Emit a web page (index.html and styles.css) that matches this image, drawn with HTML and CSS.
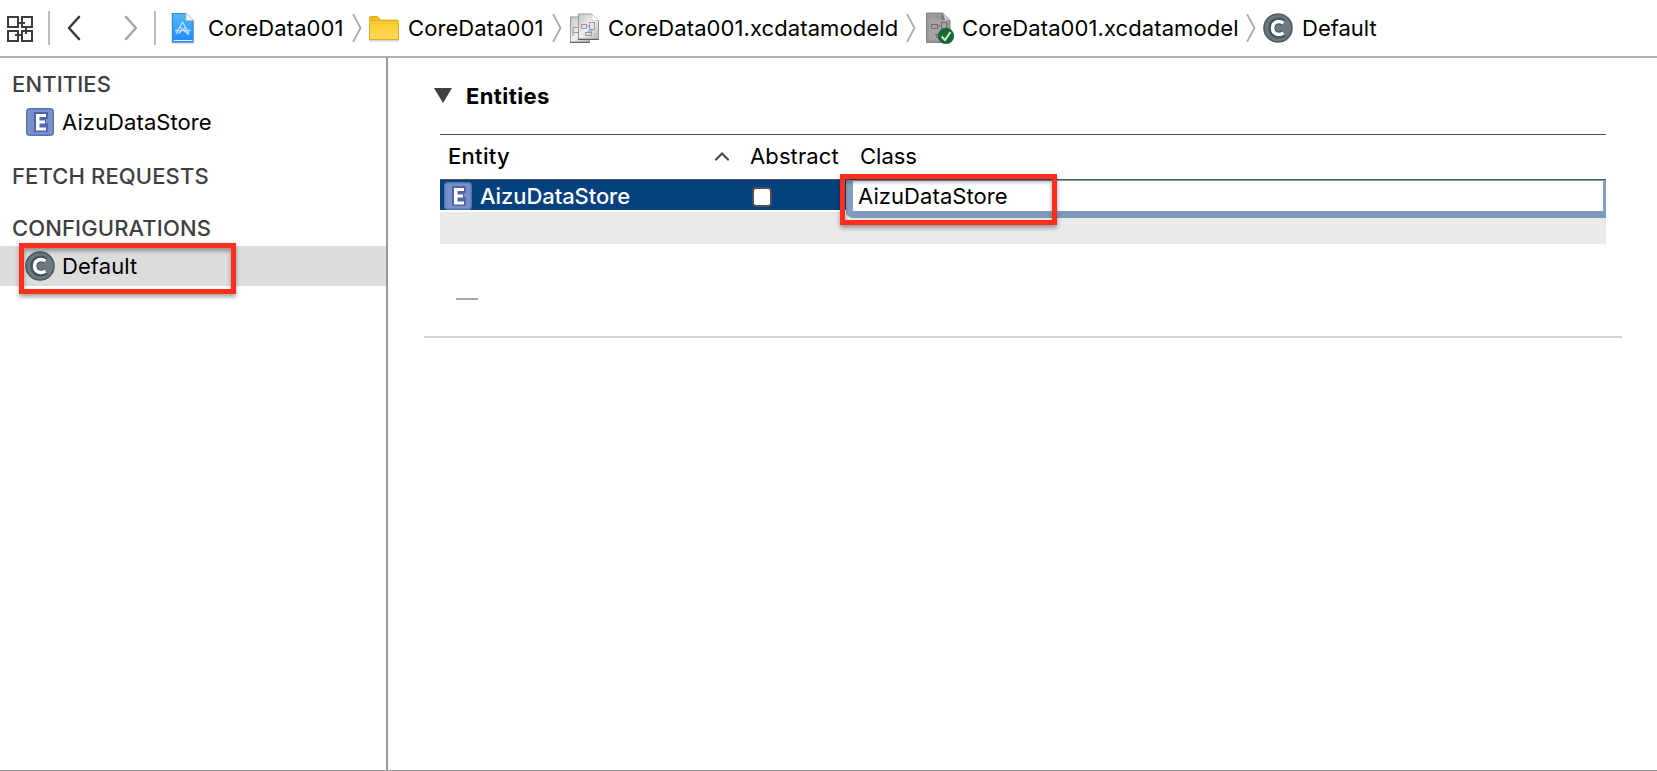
FILE: index.html
```
<!DOCTYPE html>
<html lang="en">
<head>
<meta charset="utf-8">
<title>CoreData001</title>
<link rel="stylesheet" href="styles.css">
</head>
<body>
<svg class="defs" width="0" height="0" aria-hidden="true">
  <defs>
    <linearGradient id="blue" x1="0" y1="0" x2="0" y2="1"><stop offset="0" stop-color="#52b9f5"/><stop offset="1" stop-color="#2089fb"/></linearGradient>
    <linearGradient id="gold" x1="0" y1="0" x2="0" y2="1"><stop offset="0" stop-color="#ffce2c"/><stop offset="1" stop-color="#ffda5c"/></linearGradient>
    <linearGradient id="paper" x1="0" y1="0" x2="1" y2="1"><stop offset="0" stop-color="#c4c4c4"/><stop offset=".5" stop-color="#f0f0f0"/><stop offset="1" stop-color="#b8b8b8"/></linearGradient>
    <symbol id="config" viewBox="0 0 30 30">
      <circle cx="15" cy="15" r="14" fill="#6c7a80" stroke="#4b5c63" stroke-width="1.6"/>
      <path d="M20.8 9.6C15.500 6.200 8.800 8.500 8.800 15S15.500 23.800 20.800 20.400" fill="none" stroke="#44545b" stroke-width="7"/>
      <path d="M20.500 10C15.500 6.900 9.600 9 9.600 15S15.500 23.100 20.500 20" fill="none" stroke="#fff" stroke-width="3.500"/>
    </symbol>
    <symbol id="entity" viewBox="0 0 28 28">
      <rect x=".75" y=".75" width="26.500" height="26.500" rx="3" fill="#7b8fc7" stroke="#5076b8" stroke-width="1.500"/>
      <path d="M8 4h14v7h-2v4h2v9H8z" fill="#4e66ac"/>
      <path d="M10 6h10v3h-6.500v3.500h5.500v3h-5.500V19.500H20v3H10z" fill="#fff"/>
    </symbol>
  </defs>
</svg>
<div class="window">
  <header class="jumpbar">
    <svg class="related" width="26" height="26" viewBox="0 0 26 26" fill="none" stroke="#3c3c3c" stroke-width="2"><path d="M1 1h10v10H1zM15 1h10v10H15zM1 15h10v10H1zM15 15h10v10H15zM11 7h7M19 11v7M15 19H8"/></svg>
    <span class="divider"></span>
    <svg class="back" width="14" height="26" viewBox="0 0 14 26"><path d="M12 2L2 13l10 11" fill="none" stroke="#3d3d3d" stroke-width="2.600" stroke-linecap="round" stroke-linejoin="round"/></svg>
    <svg class="forward" width="14" height="26" viewBox="0 0 14 26"><path d="M2 2l10 11L2 24" fill="none" stroke="#a6a6a6" stroke-width="2.600" stroke-linecap="round" stroke-linejoin="round"/></svg>
    <span class="divider second"></span>
    <nav class="crumbs">
      <span class="crumb project">
        <svg class="glyph" width="30" height="32" viewBox="0 0 30 32"><path d="M2.500 1h15l7.500 7.500V31.500h-22.500z" fill="#999" opacity=".6"/><path d="M3.500 1.500h14l6.500 7v21.500H3.500z" fill="url(#blue)" stroke="#2b87da"/><path d="M17 1l7.500 7.500H17z" fill="#f4f4f4" stroke="#bbb" stroke-width=".6"/><path d="M4.500 28.500h19" stroke="#d9efff"/><path d="M13.500 10L7 22M13.500 10L20 22M6 18.500h15.500M10.500 14.500l9 8M9.500 21.500l7-6" fill="none" stroke="#b9e0ff" stroke-width="1.400"/></svg>
        <span class="label">CoreData001</span>
      </span>
      <svg class="sep" width="10" height="28" viewBox="0 0 10 28"><path d="M1 0l7.500 14L1 28"/></svg>
      <span class="crumb folder">
        <svg class="glyph" width="30" height="32" viewBox="0 0 30 32"><path d="M0 28h30v1.500H0z" fill="#999" opacity=".4"/><path d="M.5 6q0-1.500 1.500-1.500h6q1.500 0 2.500 2l1 1.500H28q1.500 0 1.500 1.500V27.500H.5z" fill="#efbb25" stroke="#e3b02b"/><path d="M1 11.500h28v15.500H1z" fill="url(#gold)"/><path d="M.5 10.500h29" stroke="#f9d45c"/><path d="M.5 27.500h29" stroke="#e0ad29"/></svg>
        <span class="label">CoreData001</span>
      </span>
      <svg class="sep" width="10" height="28" viewBox="0 0 10 28"><path d="M1 0l7.500 14L1 28"/></svg>
      <span class="crumb bundle">
        <svg class="glyph" width="30" height="32" viewBox="0 0 30 32"><path d="M1.500 5h19v25h-19z" fill="url(#paper)" stroke="#999"/><path d="M1 30.500h20" stroke="#666"/><path d="M4 15.500h6v5H4zM4 24v-3.500" fill="none" stroke="#8b9ac0"/><path d="M4 15.500h6" stroke="#cc8585"/><path d="M9.500 2H23l6.500 6.500v18.500h-20z" fill="url(#paper)" stroke="#999"/><path d="M9 27.500h21" stroke="#606060"/><path d="M23 2v6.500h6.500z" fill="#fff" stroke="#bbb" stroke-width=".5"/><path d="M12.500 12.500h5v4h-5zM20.500 10.500h5v7h-5zM16.500 20.500h6v3h-6zM17.500 14h3M23 17.500v1.500h-3.500v1.500" fill="none" stroke="#8b9ac0"/><path d="M12 12.500h6M20 10.500h6M16 20.500h7" stroke="#d47f86"/></svg>
        <span class="label">CoreData001.xcdatamodeld</span>
      </span>
      <svg class="sep" width="10" height="28" viewBox="0 0 10 28"><path d="M1 0l7.500 14L1 28"/></svg>
      <span class="crumb model">
        <svg class="glyph" width="30" height="32" viewBox="0 0 30 32"><path d="M.5 1H17l7 7v22.500H.5z" fill="#999" stroke="#858585"/><path d="M3 7h18v21H3z" fill="#a4a4a4"/><path d="M15.500 1.500V8H24z" fill="#7b7b7b"/><path d="M17 1l7 7h-5z" fill="#ccc"/><path d="M5.500 12.500h6v4h-6zM15.500 10.500h5v7h-5zM11.500 14h4M10.500 22.500h6v3h-6zM18 17.500v3" fill="none" stroke="#6b6f7d"/><path d="M5 12.500h7M15 10.500h6M9 22.500h5" stroke="#a6545c"/><circle cx="20" cy="24" r="7.800" fill="#12682f" stroke="#0d5526" stroke-width=".6"/><path d="M15.500 24.500l3.500 3.500 5.500-8" fill="none" stroke="#d5ead9" stroke-width="2"/></svg>
        <span class="label">CoreData001.xcdatamodel</span>
      </span>
      <svg class="sep" width="10" height="28" viewBox="0 0 10 28"><path d="M1 0l7.500 14L1 28"/></svg>
      <span class="crumb leaf">
        <svg class="glyph" width="30" height="30"><use href="#config"/></svg>
        <span class="label">Default</span>
      </span>
    </nav>
  </header>
  <div class="body">
    <aside class="sidebar">
      <h2 class="group">ENTITIES</h2>
      <div class="item"><svg class="entity-icon" width="28" height="28"><use href="#entity"/></svg><span class="name">AizuDataStore</span></div>
      <h2 class="group fetch">FETCH REQUESTS</h2>
      <h2 class="group configs">CONFIGURATIONS</h2>
      <div class="item selected"><svg class="config-icon" width="30" height="30"><use href="#config"/></svg><span class="name default">Default</span><span class="callout"></span></div>
    </aside>
    <main class="editor">
      <div class="section-title">
        <svg width="18" height="15" viewBox="0 0 18 15"><path d="M0 0h18L9 15z" fill="#404040"/></svg>
        <h1 class="heading">Entities</h1>
      </div>
      <div class="table">
        <div class="thead">
          <span class="col-entity"><span class="th-entity">Entity</span><svg width="14" height="9" viewBox="0 0 14 9"><path d="M1 7.500L7 1.500l6 6" fill="none" stroke="#4a4a4a" stroke-width="2.200" stroke-linecap="round" stroke-linejoin="round"/></svg></span>
          <span class="th-abstract">Abstract</span>
          <span class="th-class">Class</span>
        </div>
        <div class="row">
          <svg class="row-icon" width="28" height="28"><use href="#entity"/></svg>
          <span class="name row-name">AizuDataStore</span>
          <span class="checkbox"></span>
          <div class="field"><span class="name">AizuDataStore</span><span class="callout"></span></div>
        </div>
        <div class="row-empty"></div>
      </div>
      <div class="minus"></div>
      <div class="rule"></div>
    </main>
  </div>
</div>
</body>
</html>
```
FILE: styles.css
```
* { box-sizing: border-box; }
body { margin: 0; background: #fff; color: #000; font: 22px/30px Inter, "Liberation Sans", sans-serif; white-space: nowrap; }
svg { display: block; flex: none; }
.defs { position: absolute; }
.window { height: 771px; display: flex; flex-direction: column; overflow: hidden; border-bottom: 1px solid #999; }

.jumpbar { height: 58px; flex: none; display: flex; align-items: flex-start; border-bottom: 2px solid #b0b0b0; padding-left: 7px; }
.related { margin-top: 16px; }
.divider { width: 2px; height: 34px; margin: 11px 0 0 15px; background: #bcbcbc; }
.back { margin: 15px 0 0 17px; }
.forward { margin: 15px 0 0 43px; }
.second { margin-left: 16px; }
.crumbs { display: flex; height: 56px; align-items: center; padding-left: 13px; }
.crumb { display: flex; align-items: center; gap: 9px; }
.project { width: 183px; }
.folder { width: 183px; }
.bundle { width: 337px; }
.model { width: 320px; }
.model .glyph { margin-right: -3px; }
.sep { margin-right: 7px; fill: none; stroke: #ababab; stroke-width: 1.8; }
.bundle + .sep { margin-right: 10px; }
.label { letter-spacing: 0.09px; }
.leaf .label { letter-spacing: 0; }

.body { flex: 1; display: flex; }
.sidebar { width: 388px; border-right: 2px solid #999; padding-top: 11px; }
.group { margin: 0; padding-left: 12px; font-size: 22px; font-weight: 500; line-height: 30px; letter-spacing: 0.12px; color: #404040; }
.item { display: flex; align-items: center; height: 40px; margin-top: 3px; padding-left: 26px; gap: 8px; }
.item .name { letter-spacing: 0.08px; }
.fetch { margin-top: 19px; }
.configs { margin-top: 22px; }
.selected { position: relative; background: #dcdcdc; padding-left: 25px; gap: 7px; }
.callout { position: absolute; left: 19px; top: -3px; width: 217px; height: 51px; border: 5px solid #ff2d1c; box-shadow: 0 3px 4px rgba(0,0,0,.35), inset 0 3px 4px rgba(0,0,0,.35); }

.editor { flex: 1; padding: 23px 35px 0 36px; }
.section-title { display: flex; align-items: center; gap: 14px; padding-left: 10px; }
.section-title svg { margin-bottom: 1px; }
.heading { margin: 0; font-size: 22px; font-weight: 700; line-height: 30px; letter-spacing: 0.4px; }
.table { margin: 23px 16px 0; height: 110px; border-top: 1px solid #555; }
.thead { display: flex; align-items: flex-start; height: 45px; padding-top: 6px; border-bottom: 1px solid #555; }
.col-entity { display: flex; width: 310px; padding: 0 21px 0 8px; justify-content: space-between; align-items: center; }
.th-entity { font-weight: 500; letter-spacing: 0.3px; }
.th-abstract { width: 110px; letter-spacing: 0.12px; }
.row { height: 30px; display: flex; align-items: flex-start; background: #05417e; padding-left: 4px; }
.row-icon { margin-top: 2px; }
.row-name { width: 272px; margin: 1px 0 0 8px; color: #fff; }
.row .row-name { font-weight: 500; letter-spacing: -0.08px; }
.checkbox { width: 20px; height: 20px; margin-top: 7px; border: 2px solid #505050; border-radius: 4px; background: #fff; }
.field { position: relative; z-index: 1; flex: 1; height: 38px; margin-left: 74px; padding-left: 5px; background: #fff; border: 7px solid #819fbf; border-top-width: 1px; border-right-width: 3px; border-bottom-color: #7d9aba; border-radius: 0 0 0 7px; }
.field .name { letter-spacing: 0.08px; }
.field .callout { left: -13px; top: -7px; }
.row-empty { height: 34px; border-top: 2px solid #fff; background: #eaeaea; }
.minus { width: 22px; height: 2px; margin: 54px 0 0 32px; background: #a5a5a5; }
.rule { height: 2px; margin-top: 36px; background: #d3d3d3; }
```
